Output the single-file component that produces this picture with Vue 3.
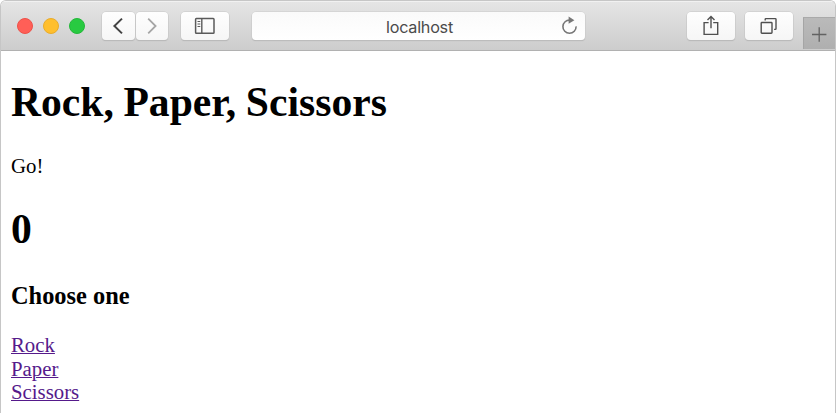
<script setup>
const choices = ['Rock', 'Paper', 'Scissors']
</script>

<template>
  <div class="window">
    <header class="toolbar">
      <div class="lights">
        <span class="light close"></span>
        <span class="light minimize"></span>
        <span class="light expand"></span>
      </div>
      <div class="nav">
        <button class="btn nav-btn" aria-label="Back">
          <svg width="33" height="28" viewBox="0 0 33 28"><path d="M20 6.6 12.4 14l7.6 7.4" fill="none" stroke="#444" stroke-width="2" /></svg>
        </button>
        <button class="btn nav-btn" aria-label="Forward">
          <svg width="33" height="28" viewBox="0 0 33 28"><path d="M12.2 6.6 19.6 14l-7.4 7.4" fill="none" stroke="#a6a6a6" stroke-width="1.8" /></svg>
        </button>
      </div>
      <button class="btn sidebar-btn" aria-label="Sidebar">
        <svg width="48" height="28" viewBox="0 0 48 28" fill="none" stroke="#5a5a5a">
          <rect x="14.6" y="6.6" width="18.4" height="14.6" rx="0.8" stroke-width="1.5" />
          <path d="M20.8 6.6v14.6" stroke-width="1.4" />
          <path d="M16.5 9.5h2.8M16.5 12h2.8M16.5 14.5h2.8" stroke-width="1" />
        </svg>
      </button>
      <div class="address">
        <span class="host">localhost</span>
        <svg class="reload" width="20" height="20" viewBox="0 0 20 20">
          <path d="M11 4.1A6.6 6.6 0 1 0 17.1 10.4" fill="none" stroke="#777" stroke-width="1.6" />
          <path d="M9.6 .6v7.2l5.8-3.6z" fill="#777" />
        </svg>
      </div>
      <button class="btn share-btn" aria-label="Share">
        <svg width="48" height="28" viewBox="0 0 48 28" fill="none" stroke="#505050" stroke-width="1.4">
          <path d="M21.6 10.6h-4.5v11.8h13.6V10.6h-4.5" />
          <path d="M24 16.3V4.6M20.5 8.1l3.5-3.5 3.5 3.5" />
        </svg>
      </button>
      <button class="btn tabs-btn" aria-label="Tabs">
        <svg width="48" height="28" viewBox="0 0 48 28" fill="none" stroke="#505050" stroke-width="1.4">
          <rect x="16.2" y="10.5" width="10.8" height="10.8" rx="0.7" />
          <path d="M20.2 8.4V7.3q0-.7.7-.7h9.4q.7 0 .7.7v9.4q0 .7-.7.7h-1.2" />
        </svg>
      </button>
      <button class="new-tab" aria-label="New tab">
        <svg width="32" height="32" viewBox="0 0 32 32"><path d="M8 16.5h14.4M15.2 9.3v14.4" fill="none" stroke="#626262" stroke-width="1.3" /></svg>
      </button>
    </header>
    <main class="page">
      <h1>Rock, Paper, Scissors</h1>
      <p>Go!</p>
      <h1 class="score">0</h1>
      <h3>Choose one</h3>
      <nav class="choices">
        <div v-for="choice in choices" :key="choice"><a href="#">{{ choice }}</a></div>
      </nav>
    </main>
  </div>
</template>

<style>
body {
  margin: 0;
  overflow: hidden;
  background: #fff;
}
</style>

<style scoped>
.window {
  box-sizing: border-box;
  height: 413px;
  overflow: hidden;
  border: 1px solid #c6c6c6;
  border-bottom: 0;
  border-radius: 6px 6px 0 0;
  background: #fff;
}
.toolbar {
  box-sizing: border-box;
  display: flex;
  align-items: flex-start;
  height: 50px;
  padding: 11px 0 0 16px;
  border-bottom: 1px solid #b1b1b1;
  box-shadow: inset 0 1px 0 #f1f1f1;
  background: linear-gradient(#e5e5e5, #cdcdcd);
}
.lights {
  display: flex;
  gap: 10px;
  padding-top: 6px;
}
.light {
  box-sizing: border-box;
  width: 16px;
  height: 16px;
  border-radius: 50%;
}
.close {
  background: #ff5f57;
  border: 1px solid #ee5149;
}
.minimize {
  background: #ffbf2e;
  border: 1px solid #e9ac2b;
}
.expand {
  background: #28ca41;
  border: 1px solid #24b83a;
}
button {
  display: block;
  flex: none;
  padding: 0;
  border: 0;
}
svg {
  display: block;
}
.btn {
  width: 48px;
  height: 28px;
  border-radius: 4px;
  background: linear-gradient(#fefefe, #f6f6f6);
  box-shadow: 0 0 0 0.5px #c6c6c6, 0 1px 1px #aaa;
}
.nav {
  display: flex;
  gap: 1px;
  margin-left: 17px;
}
.nav .nav-btn {
  width: 32.5px;
}
.sidebar-btn {
  margin-left: 12.5px;
}
.address {
  display: flex;
  align-items: center;
  box-sizing: border-box;
  width: 333px;
  height: 28px;
  margin-left: 23px;
  padding: 0 6px 0 26px;
  border-radius: 4px;
  background: linear-gradient(#fafafa, #fff);
  box-shadow: 0 0 0 0.5px #cacaca, 0 1px 1px #aaa;
}
.host {
  flex: 1;
  padding: 1px 0 0 3px;
  color: #4b4b4b;
  font: 16.2px/20px Inter, "Liberation Sans", sans-serif;
  letter-spacing: -0.25px;
  text-align: center;
}
.share-btn {
  margin-left: 102px;
}
.tabs-btn {
  margin-left: 10.5px;
}
.new-tab {
  box-sizing: border-box;
  width: 32px;
  height: 32px;
  margin: 5px 0 0 auto;
  border-left: 1px solid #a5a5a5;
  border-top: 1px solid #aaa;
  background: linear-gradient(#bababa, #afafaf);
}
.page {
  padding: 27px 10px 0;
  color: #000;
  font: 20.8px/23.5px "Liberation Serif", serif;
}
h1,
h3,
p {
  margin: 0;
}
h1 {
  font-size: 41.6px;
  line-height: 48px;
  word-spacing: -0.8px;
}
p {
  margin-top: 28.2px;
}
.score {
  margin-top: 27.3px;
}
h3 {
  margin-top: 28.8px;
  font-size: 24.4px;
  line-height: 28px;
}
.choices {
  margin-top: 23.5px;
}
a {
  color: #551a8b;
  text-decoration-thickness: 1px;
}
</style>
